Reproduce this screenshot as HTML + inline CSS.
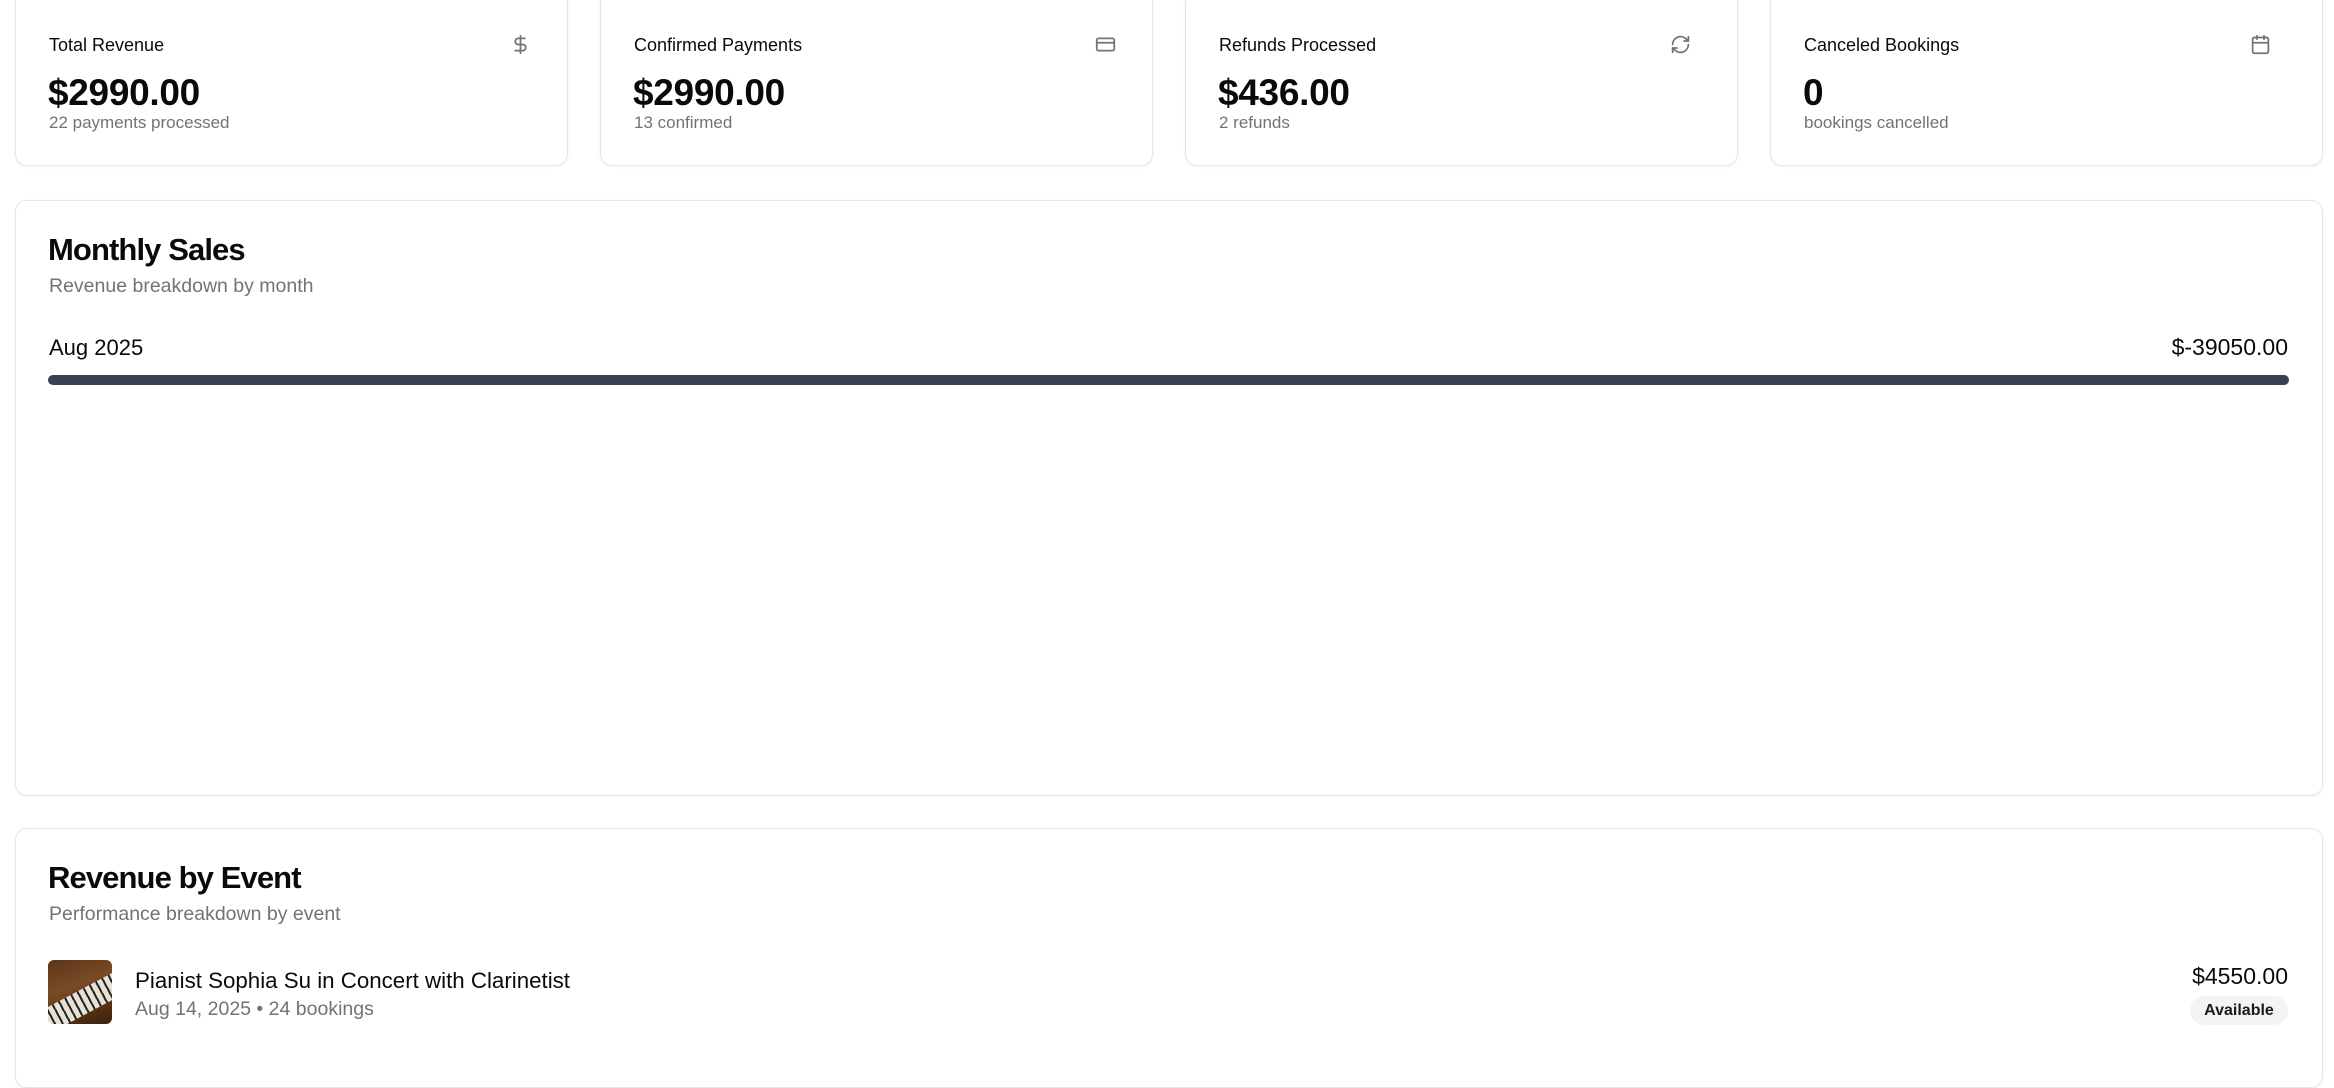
<!DOCTYPE html>
<html><head><meta charset="utf-8"><style>
*{box-sizing:border-box;margin:0;padding:0}
body{width:2334px;height:1030px;overflow:hidden;background:#fff;font-family:"Liberation Sans",sans-serif;color:#0a0a0a;position:relative}
.card{position:absolute;border:1.5px solid #e6e6e6;border-radius:12px;background:#fff;box-shadow:0 1px 3px rgba(0,0,0,.05)}
.abs{position:absolute;white-space:nowrap}
.t{font-size:18px}
.v{font-size:37px;font-weight:bold;letter-spacing:-0.3px}
.s{font-size:17px;color:#737373}
.ic{position:absolute;width:21px;height:21px}
.h{font-size:31px;font-weight:bold;letter-spacing:-0.9px}
.sub{font-size:19.5px;color:#737373}
</style></head><body>

<div class="card" style="left:15px;top:-10px;width:553px;height:176px"></div>
<div class="card" style="left:600px;top:-10px;width:553px;height:176px"></div>
<div class="card" style="left:1185px;top:-10px;width:553px;height:176px"></div>
<div class="card" style="left:1770px;top:-10px;width:553px;height:176px"></div>

<div class="abs t" style="left:49px;top:35px">Total Revenue</div>
<div class="abs v" style="left:48px;top:72px">$2990.00</div>
<div class="abs s" style="left:49px;top:113px">22 payments processed</div>
<svg class="ic" style="left:510px;top:34px" viewBox="0 0 24 24" fill="none" stroke="#737373" stroke-width="2" stroke-linecap="round"><line x1="12" y1="2" x2="12" y2="22"/><path d="M17 5H9.5a3.5 3.5 0 0 0 0 7h5a3.5 3.5 0 0 1 0 7H6"/></svg>

<div class="abs t" style="left:634px;top:35px">Confirmed Payments</div>
<div class="abs v" style="left:633px;top:72px">$2990.00</div>
<div class="abs s" style="left:634px;top:113px">13 confirmed</div>
<svg class="ic" style="left:1095px;top:34px" viewBox="0 0 24 24" fill="none" stroke="#737373" stroke-width="2" stroke-linecap="round"><rect x="2" y="5" width="20" height="14" rx="2"/><line x1="2" y1="10" x2="22" y2="10"/></svg>

<div class="abs t" style="left:1219px;top:35px">Refunds Processed</div>
<div class="abs v" style="left:1218px;top:72px">$436.00</div>
<div class="abs s" style="left:1219px;top:113px">2 refunds</div>
<svg class="ic" style="left:1670px;top:34px" viewBox="0 0 24 24" fill="none" stroke="#737373" stroke-width="2" stroke-linecap="round" stroke-linejoin="round"><path d="M3 12a9 9 0 0 1 15-6.7L21 8"/><path d="M21 3v5h-5"/><path d="M21 12a9 9 0 0 1-15 6.7L3 16"/><path d="M8 16H3v5"/></svg>

<div class="abs t" style="left:1804px;top:35px">Canceled Bookings</div>
<div class="abs v" style="left:1803px;top:72px">0</div>
<div class="abs s" style="left:1804px;top:113px">bookings cancelled</div>
<svg class="ic" style="left:2250px;top:34px" viewBox="0 0 24 24" fill="none" stroke="#737373" stroke-width="2" stroke-linecap="round"><rect x="3" y="4" width="18" height="18" rx="2"/><line x1="16" y1="2" x2="16" y2="6"/><line x1="8" y1="2" x2="8" y2="6"/><line x1="3" y1="10" x2="21" y2="10"/></svg>

<div class="card" style="left:15px;top:200px;width:2308px;height:596px"></div>
<div class="abs h" style="left:48px;top:232px">Monthly Sales</div>
<div class="abs sub" style="left:49px;top:275px">Revenue breakdown by month</div>
<div class="abs" style="left:49px;top:335px;font-size:22px">Aug 2025</div>
<div class="abs" style="right:46px;top:334px;font-size:23px">$-39050.00</div>
<div class="abs" style="left:48px;top:375px;width:2241px;height:10px;border-radius:5px;background:#374151"></div>

<div class="card" style="left:15px;top:828px;width:2308px;height:260px"></div>
<div class="abs h" style="left:48px;top:860px">Revenue by Event</div>
<div class="abs sub" style="left:49px;top:903px">Performance breakdown by event</div>
<div class="abs" style="left:48px;top:960px;width:64px;height:64px;border-radius:6px;overflow:hidden;background:linear-gradient(160deg,#5a3518 0%,#7a4a25 40%,#3a200c 100%)">
<div style="position:absolute;left:-20px;top:30px;width:110px;height:24px;transform:rotate(-28deg);background:repeating-linear-gradient(90deg,#e8e0d2 0 5px,#222 5px 7px)"></div>
</div>
<div class="abs" style="left:135px;top:968px;font-size:22.3px">Pianist Sophia Su in Concert with Clarinetist</div>
<div class="abs" style="left:135px;top:998px;font-size:19.5px;color:#737373">Aug 14, 2025 • 24 bookings</div>
<div class="abs" style="right:46px;top:963px;font-size:23px">$4550.00</div>
<div class="abs" style="left:2190px;top:996px;width:98px;height:29px;border-radius:15px;background:#f4f4f4;font-size:16px;font-weight:bold;text-align:center;line-height:29px;color:#1a1a1a">Available</div>
</body></html>
